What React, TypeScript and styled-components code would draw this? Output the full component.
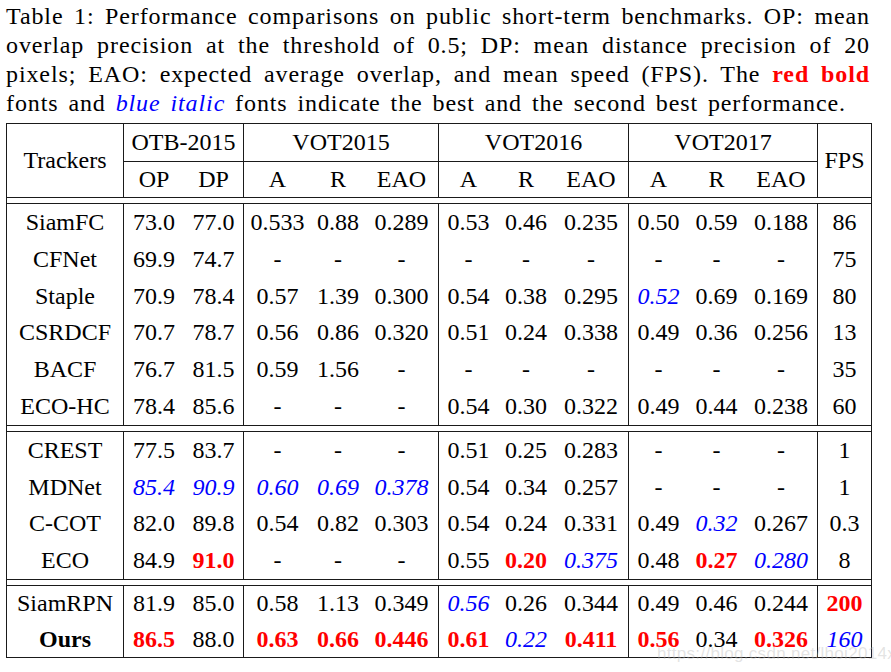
import React from "react";
import styled, { createGlobalStyle } from "styled-components";

const GlobalStyle = createGlobalStyle`
  body {
    margin: 0;
    background: #ffffff;
    font-family: "Liberation Serif", serif;
    color: #000000;
  }
`;

const COLS = "117px 60px 60px 67px 54px 74px 59px 56px 75px 59px 57px 73px 53px";
const DIVIDERS = [0, 2, 5, 8, 11];

const Page = styled.div`
  position: relative;
  width: 891px;
  height: 672px;
  padding: 2px 0 0 6px;
  box-sizing: border-box;
  overflow: hidden;
  font-family: "Liberation Serif", serif;
`;

const Caption = styled.div`
  width: 864px;
  font-size: 24px;
  letter-spacing: 0.9px;
  word-spacing: 3px;
`;

const CaptionLine = styled.div<{ $last?: boolean }>`
  height: 29px;
  line-height: 29px;
  white-space: nowrap;
  text-align: ${(p) => (p.$last ? "left" : "justify")};
  text-align-last: ${(p) => (p.$last ? "left" : "justify")};
`;

const RedBold = styled.span`
  color: #ff0000;
  font-weight: 700;
`;

const BlueItalic = styled.span`
  color: #0000ff;
  font-style: italic;
`;

const Frame = styled.div`
  margin-top: 5px;
  width: 864px;
  border-left: 1px solid #1a1a1a;
  border-right: 1px solid #1a1a1a;
  display: flex;
  flex-direction: column;
  gap: 5px;
  font-size: 24px;
`;

const Section = styled.div<{ $rowH: number; $header?: boolean }>`
  display: grid;
  grid-template-columns: ${COLS};
  grid-template-rows: ${(p) => (p.$header ? "38px 35px" : "none")};
  grid-auto-rows: ${(p) => p.$rowH}px;
  border-top: 1px solid #1a1a1a;
  border-bottom: 1px solid #1a1a1a;
`;

const Cell = styled.div<{
  $divider?: boolean;
  $under?: boolean;
  $span?: number;
  $tall?: boolean;
  $tone?: "plain" | "red" | "blue" | "strong";
}>`
  box-sizing: border-box;
  display: flex;
  align-items: center;
  justify-content: center;
  white-space: nowrap;
  border-right: ${(p) => (p.$divider ? "1px solid #1a1a1a" : "none")};
  border-bottom: ${(p) => (p.$under ? "1px solid #1a1a1a" : "none")};
  grid-column: ${(p) => (p.$span ? `span ${p.$span}` : "auto")};
  grid-row: ${(p) => (p.$tall ? "span 2" : "auto")};
  color: ${(p) => (p.$tone === "red" ? "#ff0000" : p.$tone === "blue" ? "#0000ff" : "#000000")};
  font-weight: ${(p) => (p.$tone === "red" || p.$tone === "strong" ? 700 : 400)};
  font-style: ${(p) => (p.$tone === "blue" ? "italic" : "normal")};
`;

const Watermark = styled.div`
  position: absolute;
  left: 657px;
  top: 644px;
  font-family: "Liberation Sans", Arial, sans-serif;
  font-size: 17px;
  color: rgba(185, 185, 185, 0.4);
  letter-spacing: 0.3px;
  pointer-events: none;
`;

// "*" marks the best (red bold), "~" the second best (blue italic), "!" bold black
const groups: { rowH: number; rows: string[][] }[] = [
  {
    rowH: 36.83,
    rows: [
      ["SiamFC", "73.0", "77.0", "0.533", "0.88", "0.289", "0.53", "0.46", "0.235", "0.50", "0.59", "0.188", "86"],
      ["CFNet", "69.9", "74.7", "-", "-", "-", "-", "-", "-", "-", "-", "-", "75"],
      ["Staple", "70.9", "78.4", "0.57", "1.39", "0.300", "0.54", "0.38", "0.295", "~0.52", "0.69", "0.169", "80"],
      ["CSRDCF", "70.7", "78.7", "0.56", "0.86", "0.320", "0.51", "0.24", "0.338", "0.49", "0.36", "0.256", "13"],
      ["BACF", "76.7", "81.5", "0.59", "1.56", "-", "-", "-", "-", "-", "-", "-", "35"],
      ["ECO-HC", "78.4", "85.6", "-", "-", "-", "0.54", "0.30", "0.322", "0.49", "0.44", "0.238", "60"],
    ],
  },
  {
    rowH: 36.75,
    rows: [
      ["CREST", "77.5", "83.7", "-", "-", "-", "0.51", "0.25", "0.283", "-", "-", "-", "1"],
      ["MDNet", "~85.4", "~90.9", "~0.60", "~0.69", "~0.378", "0.54", "0.34", "0.257", "-", "-", "-", "1"],
      ["C-COT", "82.0", "89.8", "0.54", "0.82", "0.303", "0.54", "0.24", "0.331", "0.49", "~0.32", "0.267", "0.3"],
      ["ECO", "84.9", "*91.0", "-", "-", "-", "0.55", "*0.20", "~0.375", "0.48", "*0.27", "~0.280", "8"],
    ],
  },
  {
    rowH: 35.5,
    rows: [
      ["SiamRPN", "81.9", "85.0", "0.58", "1.13", "0.349", "~0.56", "0.26", "0.344", "0.49", "0.46", "0.244", "*200"],
      ["!Ours", "*86.5", "88.0", "*0.63", "*0.66", "*0.446", "*0.61", "~0.22", "*0.411", "*0.56", "0.34", "*0.326", "~160"],
    ],
  },
];

const parse = (raw: string) => {
  const mark = raw.charAt(0);
  if (mark === "*") return { text: raw.slice(1), tone: "red" as const };
  if (mark === "~") return { text: raw.slice(1), tone: "blue" as const };
  if (mark === "!") return { text: raw.slice(1), tone: "strong" as const };
  return { text: raw, tone: "plain" as const };
};

const App = () => {
  return (
    <Page>
      <GlobalStyle />
      <Caption>
        <CaptionLine>Table 1: Performance comparisons on public short-term benchmarks. OP: mean</CaptionLine>
        <CaptionLine>overlap precision at the threshold of 0.5; DP: mean distance precision of 20</CaptionLine>
        <CaptionLine>
          pixels; EAO: expected average overlap, and mean speed (FPS). The <RedBold>red bold</RedBold>
        </CaptionLine>
        <CaptionLine $last>
          fonts and <BlueItalic>blue italic</BlueItalic> fonts indicate the best and the second best performance.
        </CaptionLine>
      </Caption>

      <Frame>
        <Section $rowH={35} $header>
          <Cell $tall $divider>Trackers</Cell>
          <Cell $span={2} $divider $under>OTB-2015</Cell>
          <Cell $span={3} $divider $under>VOT2015</Cell>
          <Cell $span={3} $divider $under>VOT2016</Cell>
          <Cell $span={3} $divider $under>VOT2017</Cell>
          <Cell $tall>FPS</Cell>
          {["OP", "DP", "A", "R", "EAO", "A", "R", "EAO", "A", "R", "EAO"].map((h, i) => (
            <Cell key={i} $divider={i === 1 || i === 4 || i === 7 || i === 10}>
              {h}
            </Cell>
          ))}
        </Section>

        {groups.map((g, gi) => (
          <Section key={gi} $rowH={g.rowH}>
            {g.rows.map((row) =>
              row.map((raw, ci) => {
                const { text, tone } = parse(raw);
                return (
                  <Cell key={`${row[0]}-${ci}`} $divider={DIVIDERS.includes(ci)} $tone={tone}>
                    {text}
                  </Cell>
                );
              })
            )}
          </Section>
        ))}
      </Frame>

      <Watermark>https://blog.csdn.net/lhoi2014xjx</Watermark>
    </Page>
  );
};

export default App;
